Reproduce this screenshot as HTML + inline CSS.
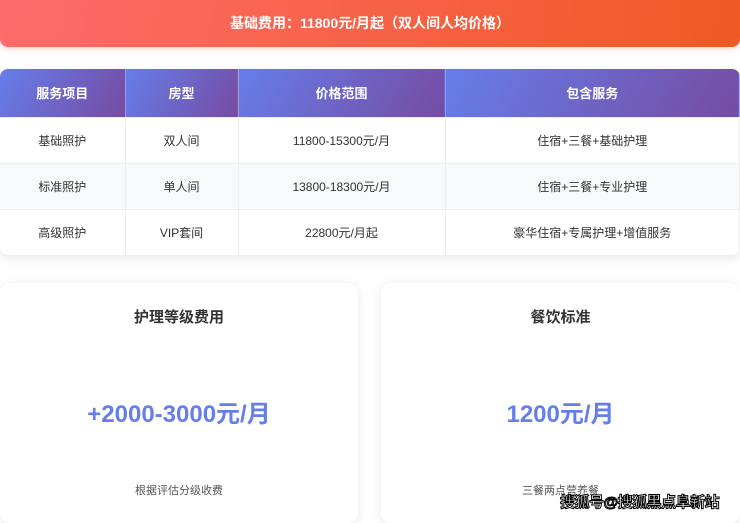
<!DOCTYPE html>
<html><head><meta charset="utf-8"><style>
*{margin:0;padding:0;box-sizing:border-box}
body{width:740px;height:517px;overflow:hidden;background:#fff;font-family:"Liberation Sans","Noto Sans CJK SC",sans-serif;position:relative}
.ban{position:absolute;left:0;top:0;width:740px;height:47px;border-radius:0 0 8px 8px;background:linear-gradient(100deg,#ff6b6b,#ee5a24);color:#fff;font-weight:bold;font-size:14px;text-align:center;line-height:47px;box-shadow:0 2px 6px rgba(238,90,36,.25)}
.tbl{position:absolute;left:0;top:69px;width:740px;border-radius:8px;overflow:hidden;box-shadow:0 3px 10px rgba(0,0,0,.1)}
table{border-collapse:collapse;width:740px;font-size:12px;color:#333}
th{height:48px;color:#fff;font-size:13px;font-weight:bold;background:linear-gradient(120deg,#667eea,#764ba2);border-right:1px solid rgba(255,255,255,.35)}
td{height:46px;text-align:center;border-right:1px solid #eee;border-top:1px solid #eee}
tr:nth-child(3) td{background:#f8f9fa}
.card{position:absolute;top:283px;height:240px;border-radius:10px;background:#fff;box-shadow:0 2px 10px rgba(0,0,0,.1);text-align:center}
.card h3{position:absolute;top:23px;width:100%;font-size:15px;color:#333;font-weight:bold}
.card .p{position:absolute;top:111px;width:100%;font-size:24px;color:#667eea;font-weight:bold}
.card .d{position:absolute;top:199px;width:100%;font-size:11px;color:#555}
.wm{position:absolute;left:560px;top:491px;font-size:15px;font-weight:bold;color:#fff;-webkit-text-stroke:1px #000;letter-spacing:-0.5px}
</style></head><body>
<div class="ban">基础费用：11800元/月起（双人间人均价格）</div>
<div class="tbl"><table>
<tr><th style="width:125px">服务项目</th><th style="width:113px">房型</th><th style="width:207px">价格范围</th><th>包含服务</th></tr>
<tr><td>基础照护</td><td>双人间</td><td>11800-15300元/月</td><td>住宿+三餐+基础护理</td></tr>
<tr><td>标准照护</td><td>单人间</td><td>13800-18300元/月</td><td>住宿+三餐+专业护理</td></tr>
<tr><td>高级照护</td><td>VIP套间</td><td>22800元/月起</td><td>豪华住宿+专属护理+增值服务</td></tr>
</table></div>
<div class="card" style="left:0;width:358px"><h3>护理等级费用</h3><div class="p">+2000-3000元/月</div><div class="d">根据评估分级收费</div></div>
<div class="card" style="left:381px;width:359px"><h3>餐饮标准</h3><div class="p">1200元/月</div><div class="d">三餐两点营养餐</div></div>
<div class="wm">搜狐号@搜狐黑点阜新站</div>
</body></html>
